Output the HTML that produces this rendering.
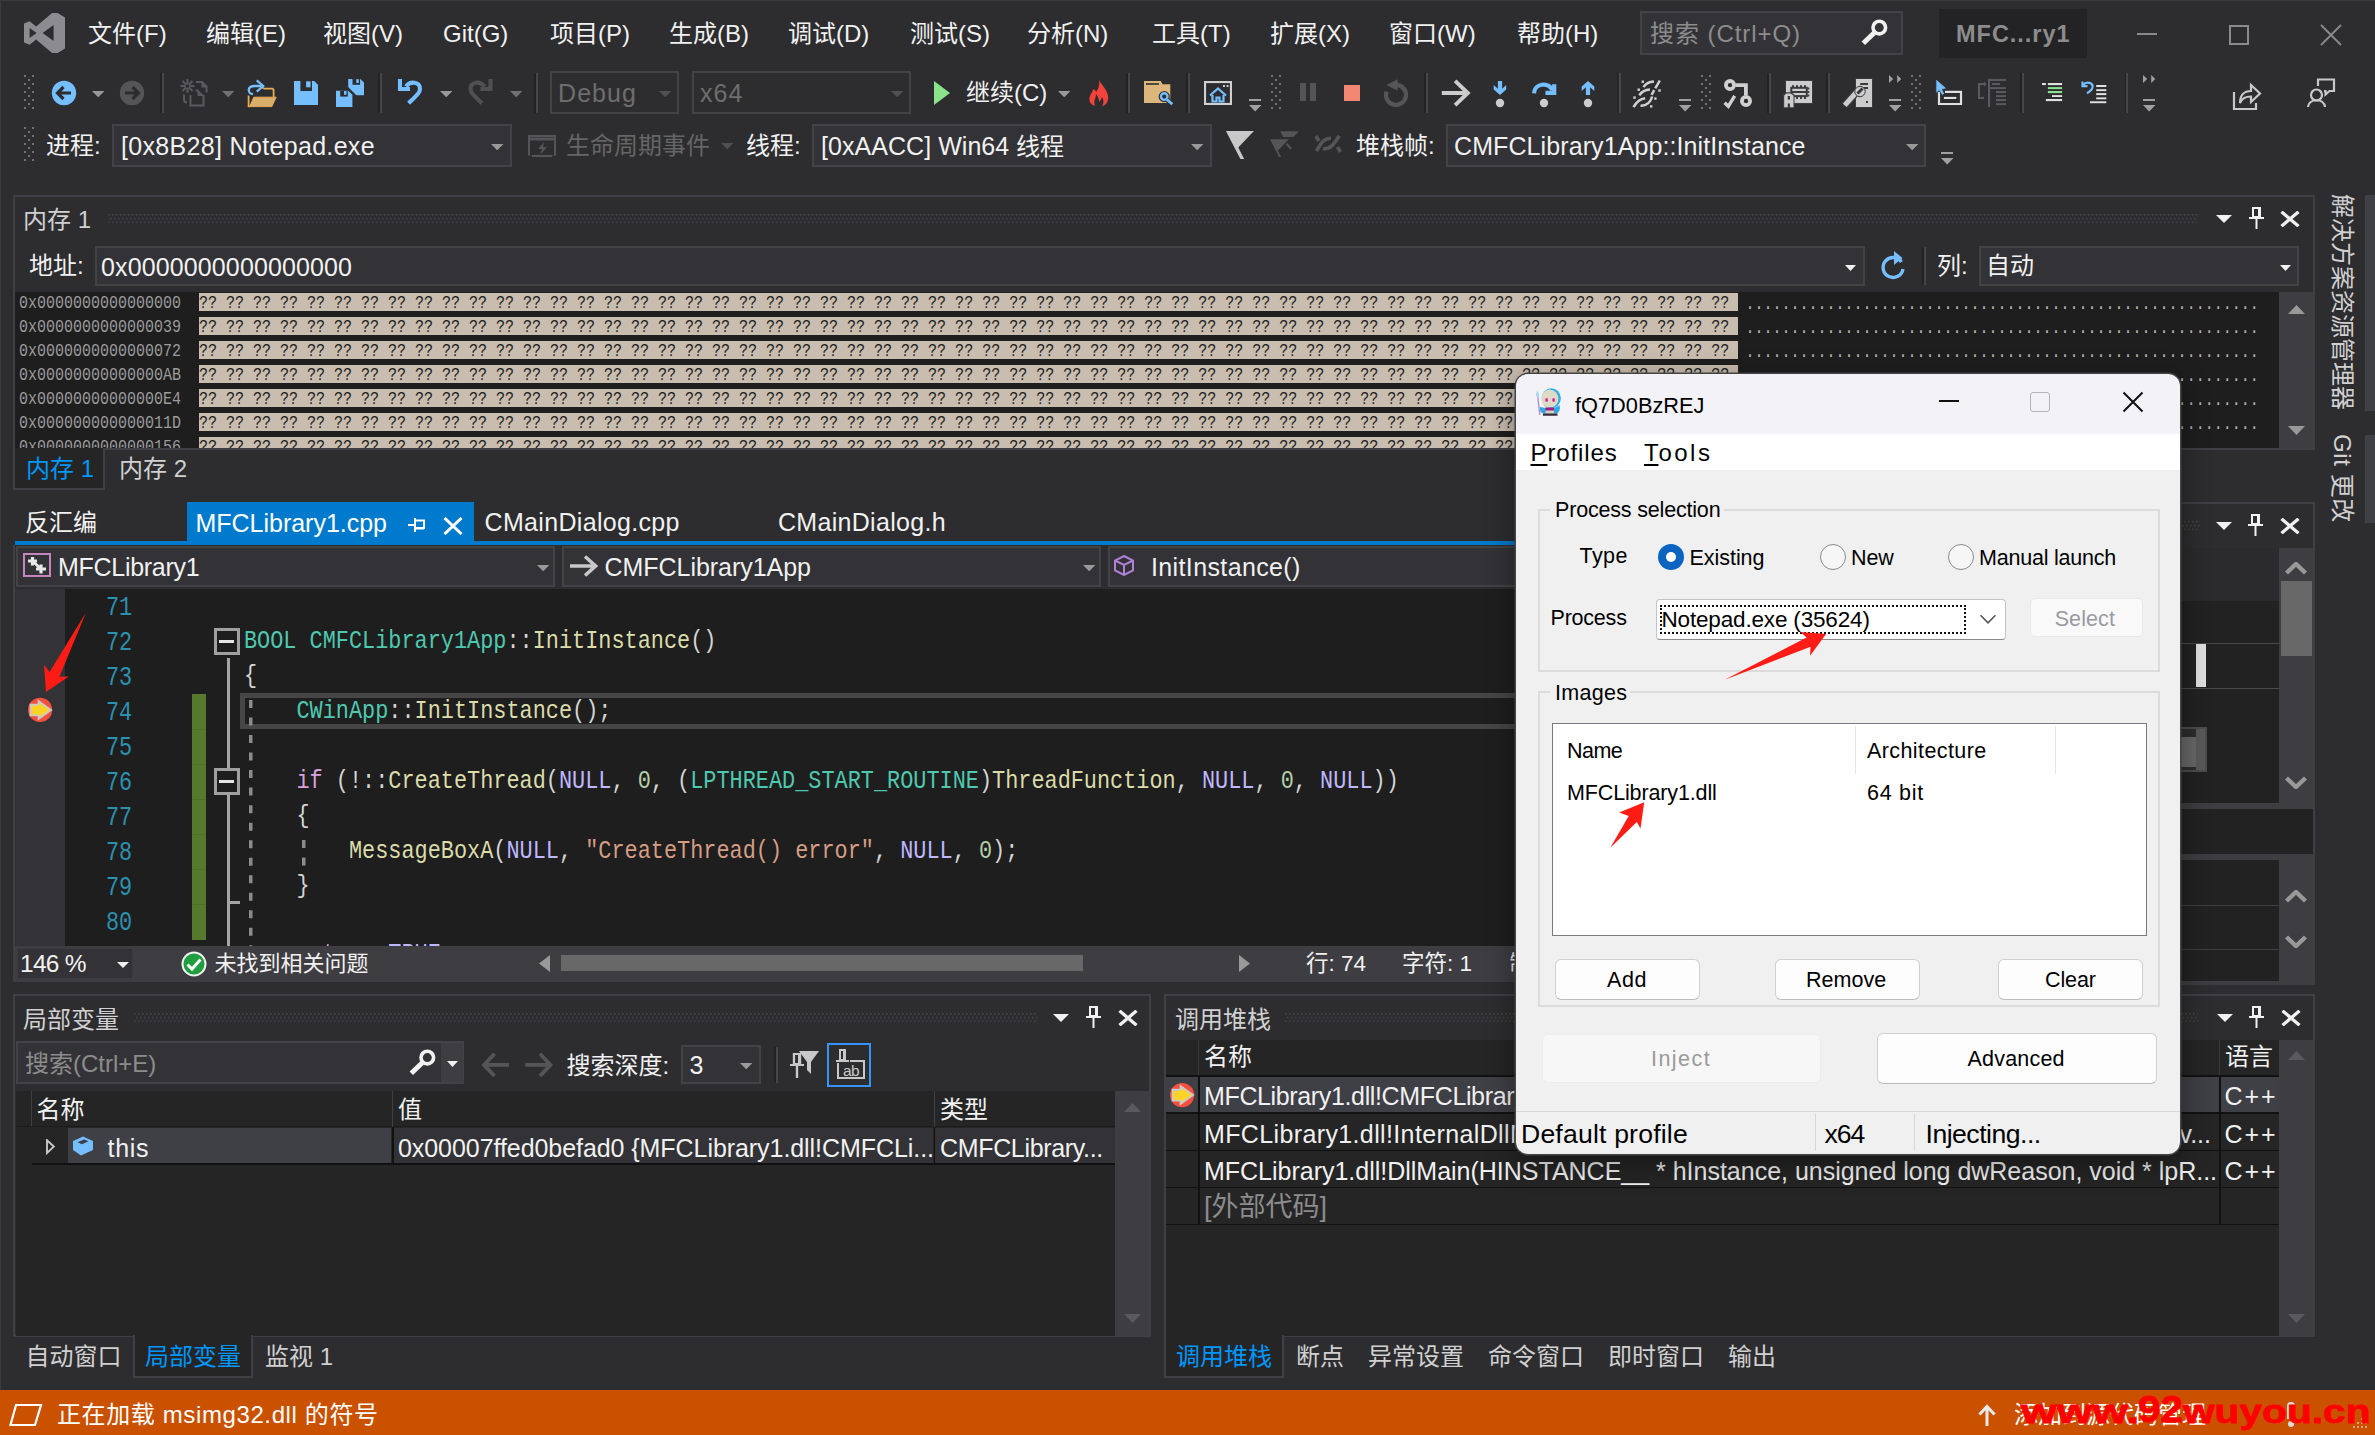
<!DOCTYPE html>
<html lang="zh-CN"><head><meta charset="utf-8"><title>MFCLibrary1</title>
<style>
html,body{margin:0;padding:0}
body{width:2375px;height:1435px;overflow:hidden;background:#2d2d30;position:relative;font-family:'Liberation Sans','Noto Sans CJK SC',sans-serif}
.b{position:absolute;display:block}
.t{position:absolute;white-space:nowrap}
.mr{position:absolute;left:4.4px;white-space:pre;font:18px 'Liberation Mono',monospace;line-height:24px;transform:scaleX(.8333);transform-origin:0 0}
.ma{color:#9b9b9b}.mh{color:#1e1e1e}.md{color:#b4b4b4;position:relative;left:-2px;top:1.5px}
.ln{position:absolute;left:90.6px;white-space:pre;font:27.6px 'Liberation Mono',monospace;line-height:40px;color:#2b91af;transform:scaleX(.791);transform-origin:0 0}
.cl{position:absolute;left:229px;white-space:pre;font:26px 'Liberation Mono',monospace;line-height:40px;color:#d4d4d4;transform:scaleX(.841);transform-origin:0 0}
.cl i{font-style:normal}
.ty{color:#4ec9b0}.fn{color:#dcdcaa}.kw{color:#d8a0df}.mc{color:#beb7ff}.nu{color:#b5cea8}.st{color:#d69d85}
.vt{writing-mode:vertical-rl;text-orientation:sideways}
.wm{color:#ff0000;font-weight:bold;font-family:'Liberation Sans',sans-serif;-webkit-text-stroke:0.8px #ff0000;transform-origin:0 100%}
.dlg{border-radius:12px;overflow:hidden;box-shadow:0 0 0 1.500px #444,0 8px 30px rgba(0,0,0,.45)}
.dlg u{text-decoration-thickness:1.500px;text-underline-offset:3px}
</style></head>
<body>
<div class="b" style="left:0px;top:0px;width:2375px;height:1px;background:#3b3b3e;"></div>
<div class="b" style="left:0px;top:0px;width:1px;height:1390px;background:#3b3b3e;"></div>
<svg class="b" style="left:24.4px;top:13px;" width="41" height="40" viewBox="0 0 41 40"><path fill="#8c8c90" fill-rule="evenodd" d="M33.600 0L41 4.600V35.400L33.600 40H28.100L12.100 26.400L5.600 31.800L0 29.400V10.600L5.600 8.200L12.100 13.600L28.100 0ZM5.600 15V25L12.600 20ZM29.600 12V28L18.600 20Z"/></svg>
<div class="t" style="left:88px;top:13.7px;line-height:40px;font-size:24px;color:#f1f1f1;">文件(F)</div>
<div class="t" style="left:206px;top:13.7px;line-height:40px;font-size:24px;color:#f1f1f1;">编辑(E)</div>
<div class="t" style="left:323px;top:13.7px;line-height:40px;font-size:24px;color:#f1f1f1;">视图(V)</div>
<div class="t" style="left:443px;top:13.7px;line-height:40px;font-size:24px;color:#f1f1f1;">Git(G)</div>
<div class="t" style="left:550px;top:13.7px;line-height:40px;font-size:24px;color:#f1f1f1;">项目(P)</div>
<div class="t" style="left:669px;top:13.7px;line-height:40px;font-size:24px;color:#f1f1f1;">生成(B)</div>
<div class="t" style="left:788px;top:13.7px;line-height:40px;font-size:24px;color:#f1f1f1;">调试(D)</div>
<div class="t" style="left:910px;top:13.7px;line-height:40px;font-size:24px;color:#f1f1f1;">测试(S)</div>
<div class="t" style="left:1027px;top:13.7px;line-height:40px;font-size:24px;color:#f1f1f1;">分析(N)</div>
<div class="t" style="left:1152px;top:13.7px;line-height:40px;font-size:24px;color:#f1f1f1;">工具(T)</div>
<div class="t" style="left:1270px;top:13.7px;line-height:40px;font-size:24px;color:#f1f1f1;">扩展(X)</div>
<div class="t" style="left:1389px;top:13.7px;line-height:40px;font-size:24px;color:#f1f1f1;">窗口(W)</div>
<div class="t" style="left:1517px;top:13.7px;line-height:40px;font-size:24px;color:#f1f1f1;">帮助(H)</div>
<div class="b" style="left:1640px;top:11px;width:263px;height:44px;background:#333337;border:2px solid #434346;box-sizing:border-box"></div>
<div class="t" style="left:1650px;top:14.3px;line-height:40px;font-size:24px;color:#8c8c8c;letter-spacing:0.933px;">搜索 (Ctrl+Q)</div>
<svg class="b" style="left:1858px;top:18px" width="32" height="30" viewBox="1858 18 32 30"><circle cx="1879.300" cy="27.600" r="6.300" fill="none" stroke="#f1f1f1" stroke-width="3.600"/><path d="M1874.300 32.800L1863.300 43.200" stroke="#f1f1f1" stroke-width="5"/></svg>
<div class="b" style="left:1939px;top:9px;width:148px;height:49px;background:#232325;"></div>
<div class="t" style="left:1956px;top:14.3px;line-height:40px;font-size:23.5px;color:#8c8c8c;letter-spacing:0.977px;font-weight:bold;">MFC...ry1</div>
<div class="b" style="left:2137px;top:33px;width:20px;height:2px;background:#8a8a8a;"></div>
<div class="b" style="left:2229px;top:25px;width:20px;height:20px;border:2px solid #8a8a8a;box-sizing:border-box"></div>
<svg class="b" style="left:2320px;top:24px;" width="22" height="22" viewBox="0 0 22 22"><path d="M1 1L21 21M21 1L1 21" stroke="#8a8a8a" stroke-width="1.8"/></svg>
<svg class="b" style="left:24px;top:75px;" width="10" height="34" viewBox="0 0 10 34"><rect x="0" y="0" width="2" height="2" fill="#727276"/><rect x="8" y="0" width="2" height="2" fill="#727276"/><rect x="4" y="4" width="2" height="2" fill="#727276"/><rect x="0" y="8" width="2" height="2" fill="#727276"/><rect x="8" y="8" width="2" height="2" fill="#727276"/><rect x="4" y="12" width="2" height="2" fill="#727276"/><rect x="0" y="16" width="2" height="2" fill="#727276"/><rect x="8" y="16" width="2" height="2" fill="#727276"/><rect x="4" y="20" width="2" height="2" fill="#727276"/><rect x="0" y="24" width="2" height="2" fill="#727276"/><rect x="8" y="24" width="2" height="2" fill="#727276"/><rect x="4" y="28" width="2" height="2" fill="#727276"/><rect x="0" y="32" width="2" height="2" fill="#727276"/><rect x="8" y="32" width="2" height="2" fill="#727276"/></svg>
<svg class="b" style="left:51px;top:80px;" width="26" height="26" viewBox="0 0 26 26"><circle cx="13" cy="13" r="12.2" fill="#75beff"/><path d="M20 13H7M12.5 7L6.5 13L12.5 19" fill="none" stroke="#2d2d30" stroke-width="3.2"/></svg>
<svg class="b" style="left:91.6px;top:90.85px;" width="12.4" height="6.3" viewBox="0 0 12.4 6.3"><path d="M0 0H12.4L6.2 6.3Z" fill="#999"/></svg>
<svg class="b" style="left:119px;top:80px;" width="26" height="26" viewBox="0 0 26 26"><circle cx="13" cy="13" r="12.2" fill="#555558"/><path d="M6 13H19M13.5 7L19.5 13L13.5 19" fill="none" stroke="#2d2d30" stroke-width="3.2"/></svg>
<div class="b" style="left:160.2px;top:73.2px;width:1.8px;height:40px;background:#222224;"></div><div class="b" style="left:162px;top:73.2px;width:2px;height:40px;background:#46464a;"></div>
<svg class="b" style="left:179.5px;top:79px;" width="29" height="29" viewBox="0 0 29 29"><g fill="none" stroke="#5a5a5e" stroke-width="2"><path d="M7.500 0V14M0.500 7H14.500M2.500 2L12.500 12M12.500 2L2.500 12"/><path d="M16 3H22L26.500 7.500V13.500"/><path d="M10.500 16V26.500H23.500V16"/><path d="M15.500 11.500H18.500"/><path d="M4 15.500V20.500Q4 23.500 7 23.500"/></g><path d="M21.500 2L27.500 8.500H21.500Z" fill="#5a5a5e"/><path d="M17.500 10.500L24.500 17H17.500Z" fill="#5a5a5e"/><circle cx="7.500" cy="7" r="1.800" fill="#2d2d30"/></svg>
<svg class="b" style="left:221.8px;top:90.85px;" width="12.4" height="6.3" viewBox="0 0 12.4 6.3"><path d="M0 0H12.4L6.2 6.3Z" fill="#707070"/></svg>
<svg class="b" style="left:247px;top:79px;" width="31" height="29" viewBox="0 0 31 29"><path d="M6.800 18.200H29.200L24.800 27.600H2.600Z" fill="#d9ad6b" stroke="#e8ab53" stroke-width="1"/><path d="M1.600 16.500V27.300H3" fill="none" stroke="#e8ab53" stroke-width="1.800"/><path d="M16.500 9.700H25Q26.600 9.700 26.600 11.300V18" fill="none" stroke="#e8ab53" stroke-width="1.800"/><path d="M16.500 9.700L15.500 8.300" stroke="#e8ab53" stroke-width="1.800"/><path d="M6 15.200C0.500 14.500 -0.500 7 8 7H15.500" fill="none" stroke="#75beff" stroke-width="2.300"/><path d="M9.700 1.400L16.200 7L9.700 12.600" fill="none" stroke="#75beff" stroke-width="2.300"/></svg>
<svg class="b" style="left:293.8px;top:80.7px;" width="24.4" height="24.6" viewBox="0 0 24.4 24.6"><path d="M0 0H20.200L24.400 4.200V24.600H0Z" fill="#75beff"/><rect x="6.400" y="0" width="11.600" height="10" fill="#2d2d30"/><rect x="12.100" y="0.300" width="4.500" height="6" fill="#75beff"/></svg>
<svg class="b" style="left:335.8px;top:78.9px;" width="28.4" height="28.2" viewBox="0 0 28.4 28.2"><path d="M12.200 0H24.400L28.200 3.800V16.200H12.200Z" fill="#75beff"/><rect x="16.500" y="0" width="7.600" height="5.800" fill="#2d2d30"/><rect x="20.300" y="0.200" width="2.500" height="3.800" fill="#75beff"/><path d="M11 9L19.500 17.500" stroke="#2d2d30" stroke-width="3"/><path d="M0 11.800H12.400L16.400 15.800V28H0Z" fill="#75beff"/><rect x="4.200" y="11.800" width="7.600" height="5.800" fill="#2d2d30"/><rect x="8" y="12" width="2.500" height="3.800" fill="#75beff"/></svg>
<div class="b" style="left:378.2px;top:73.2px;width:1.8px;height:40px;background:#222224;"></div><div class="b" style="left:380px;top:73.2px;width:2px;height:40px;background:#46464a;"></div>
<svg class="b" style="left:396px;top:78px;" width="29" height="29" viewBox="0 0 29 29"><path d="M4 1V11H14" fill="none" stroke="#75beff" stroke-width="4.100"/><path d="M10 8.500C14 2.500 24 3.500 24 11C24 14.500 21.500 16.500 12.600 25.300" fill="none" stroke="#75beff" stroke-width="4.100"/></svg>
<svg class="b" style="left:439.8px;top:90.85px;" width="12.4" height="6.3" viewBox="0 0 12.4 6.3"><path d="M0 0H12.4L6.2 6.3Z" fill="#999"/></svg>
<svg class="b" style="left:466.5px;top:78px;" width="29" height="29" viewBox="0 0 29 29"><path d="M23.500 1V11H13.500" fill="none" stroke="#505053" stroke-width="4.100"/><path d="M17.500 8.500C13.500 2.500 3.500 3.500 3.500 11C3.500 14.500 6 16.500 14.900 25.300" fill="none" stroke="#505053" stroke-width="4.100"/></svg>
<svg class="b" style="left:509.8px;top:90.85px;" width="12.4" height="6.3" viewBox="0 0 12.4 6.3"><path d="M0 0H12.4L6.2 6.3Z" fill="#707070"/></svg>
<div class="b" style="left:534.2px;top:73.2px;width:1.8px;height:40px;background:#222224;"></div><div class="b" style="left:536px;top:73.2px;width:2px;height:40px;background:#46464a;"></div>
<div class="b" style="left:550px;top:71px;width:129px;height:43px;background:#2d2d30;border:2px solid #434346;box-sizing:border-box"></div>
<div class="t" style="left:558px;top:73.0px;line-height:40px;font-size:25px;color:#6d6d6d;letter-spacing:1.082px;">Debug</div>
<svg class="b" style="left:658.8px;top:90.85px;" width="12.4" height="6.3" viewBox="0 0 12.4 6.3"><path d="M0 0H12.4L6.2 6.3Z" fill="#505053"/></svg>
<div class="b" style="left:692px;top:71px;width:219px;height:43px;background:#2d2d30;border:2px solid #434346;box-sizing:border-box"></div>
<div class="t" style="left:700px;top:73.0px;line-height:40px;font-size:25px;color:#6d6d6d;letter-spacing:1.094px;">x64</div>
<svg class="b" style="left:890.8px;top:90.85px;" width="12.4" height="6.3" viewBox="0 0 12.4 6.3"><path d="M0 0H12.4L6.2 6.3Z" fill="#505053"/></svg>
<svg class="b" style="left:934px;top:81px;" width="16" height="24" viewBox="0 0 16 24"><path d="M0 0L16 12L0 24Z" fill="#8ae28a"/></svg>
<div class="t" style="left:966px;top:73.0px;line-height:40px;font-size:24px;color:#f1f1f1;">继续(C)</div>
<svg class="b" style="left:1057.8px;top:90.85px;" width="12.4" height="6.3" viewBox="0 0 12.4 6.3"><path d="M0 0H12.4L6.2 6.3Z" fill="#999"/></svg>
<svg class="b" style="left:1089px;top:80px;" width="20" height="26" viewBox="0 0 20 26"><path d="M10 0C12 4 18 9 19 16C20 22 16 26 13 26C15 23 15 20 13 17C12 20 11 21 10 22C10 19 9 16 7 14C7 19 4 20 6 26C2 25 -1 21 1 16C2 13 4 12 4 9C6 10 7 11 7 12C9 9 11 5 10 0Z" fill="#f4433c"/></svg>
<div class="b" style="left:1126.4px;top:73.2px;width:1.8px;height:40px;background:#222224;"></div><div class="b" style="left:1128.2px;top:73.2px;width:2px;height:40px;background:#46464a;"></div>
<svg class="b" style="left:1142px;top:79px" width="33" height="29" viewBox="1142 79 33 29"><path d="M1144 80.900H1160.800L1162.500 84.300H1170.300V103H1144Z" fill="#dcb67a"/><rect x="1146" y="83.200" width="13" height="1.600" fill="#2d2d30"/><circle cx="1164.200" cy="96.600" r="5.600" fill="#2d2d30"/><circle cx="1164.200" cy="96.600" r="3.300" fill="none" stroke="#75beff" stroke-width="2.400"/><path d="M1166.800 99.400L1172.300 104.300" stroke="#2d2d30" stroke-width="5"/><path d="M1166.800 99.400L1172.300 104.300" stroke="#75beff" stroke-width="2.800"/></svg>
<div class="b" style="left:1186.3px;top:73.2px;width:1.8px;height:40px;background:#222224;"></div><div class="b" style="left:1188.1px;top:73.2px;width:2px;height:40px;background:#46464a;"></div>
<svg class="b" style="left:1204px;top:81px;" width="28" height="24" viewBox="0 0 28 24"><rect x="1" y="1" width="26" height="22" fill="none" stroke="#d0d0d0" stroke-width="2.200"/><rect x="19" y="4" width="2" height="2" fill="#c8c8c8"/><rect x="22.5" y="4" width="2" height="2" fill="#c8c8c8"/><path d="M6 14.5L14 7.5L22 14.5" fill="none" stroke="#75beff" stroke-width="2.2"/><path d="M8.5 14V20.5H12.5V16.5H15.5V20.5H19.5V14" fill="none" stroke="#75beff" stroke-width="2.2"/></svg>
<div class="b" style="left:1248.8px;top:99.0px;width:12.4px;height:2px;background:#a0a0a0;"></div><svg class="b" style="left:1248.8px;top:105.0px;" width="12.4" height="6.5" viewBox="0 0 12.4 6.5"><path d="M0 0H12.4L6.2 6.400Z" fill="#a0a0a0"/></svg>
<svg class="b" style="left:1271px;top:75px;" width="10" height="34" viewBox="0 0 10 34"><rect x="0" y="0" width="2" height="2" fill="#727276"/><rect x="8" y="0" width="2" height="2" fill="#727276"/><rect x="4" y="4" width="2" height="2" fill="#727276"/><rect x="0" y="8" width="2" height="2" fill="#727276"/><rect x="8" y="8" width="2" height="2" fill="#727276"/><rect x="4" y="12" width="2" height="2" fill="#727276"/><rect x="0" y="16" width="2" height="2" fill="#727276"/><rect x="8" y="16" width="2" height="2" fill="#727276"/><rect x="4" y="20" width="2" height="2" fill="#727276"/><rect x="0" y="24" width="2" height="2" fill="#727276"/><rect x="8" y="24" width="2" height="2" fill="#727276"/><rect x="4" y="28" width="2" height="2" fill="#727276"/><rect x="0" y="32" width="2" height="2" fill="#727276"/><rect x="8" y="32" width="2" height="2" fill="#727276"/></svg>
<div class="b" style="left:1300px;top:83px;width:6px;height:18px;background:#555558;"></div><div class="b" style="left:1310px;top:83px;width:6px;height:18px;background:#555558;"></div>
<div class="b" style="left:1344px;top:85px;width:16.1px;height:16px;background:#f48771;"></div>
<svg class="b" style="left:1382px;top:77px" width="28" height="32" viewBox="1382 77 28 32"><path d="M1396 84.900A10 10 0 1 1 1386.600 91.500" fill="none" stroke="#555558" stroke-width="4.200"/><path d="M1386.300 85L1397.600 79.200V90.700Z" fill="#555558"/></svg>
<div class="b" style="left:1424.2px;top:73.2px;width:1.8px;height:40px;background:#222224;"></div><div class="b" style="left:1426px;top:73.2px;width:2px;height:40px;background:#46464a;"></div>
<svg class="b" style="left:1440px;top:78px" width="32" height="30" viewBox="1440 78 32 30"><path d="M1441.800 93H1467.500M1455.100 80.900L1467.800 93L1455.100 105.100" fill="none" stroke="#cccccc" stroke-width="3.900"/></svg>
<svg class="b" style="left:1492px;top:79px" width="16" height="30" viewBox="1492 79 16 30"><path d="M1497.900 80.900H1502.100V88.800L1506.200 85.100V89.600L1500 95.100L1493.700 89.600V85.100L1497.900 88.800Z" fill="#75beff"/><circle cx="1500" cy="103" r="4.200" fill="#cccccc"/></svg>
<svg class="b" style="left:1530px;top:79px" width="28" height="30" viewBox="1530 79 28 30"><path d="M1534 93.300C1534.500 83.500 1547.500 81.500 1552.500 90" fill="none" stroke="#75beff" stroke-width="4.200"/><path d="M1554.200 84.200V92.800H1545.400" fill="none" stroke="#75beff" stroke-width="4.200"/><circle cx="1544" cy="103" r="4.200" fill="#cccccc"/></svg>
<svg class="b" style="left:1580px;top:79px" width="16" height="30" viewBox="1580 79 16 30"><path d="M1588 80.900L1594.300 86.500V91L1590.100 87.300V94.900H1585.900V87.300L1581.700 91V86.500Z" fill="#75beff"/><circle cx="1588" cy="103" r="4.200" fill="#cccccc"/></svg>
<div class="b" style="left:1616.7px;top:73.2px;width:1.8px;height:40px;background:#222224;"></div><div class="b" style="left:1618.5px;top:73.2px;width:2px;height:40px;background:#46464a;"></div>
<svg class="b" style="left:1632px;top:78px" width="31" height="32" viewBox="1632 78 31 32"><g fill="none" stroke="#d0d0d0" stroke-width="2.500" stroke-linecap="butt"><path d="M1643.500 87.200Q1646.500 82 1654 81.600"/><path d="M1639.300 95.400Q1642.500 90 1650 89.500"/><path d="M1633.500 107.200Q1638 99 1645.200 98.200"/><path d="M1659.800 80.500L1655.300 88.300M1654.200 90.200L1651.600 94.800"/><path d="M1652.200 96.500Q1649.500 106 1640.500 105.700"/></g><g fill="#d0d0d0"><rect x="1641.600" y="80.500" width="2.400" height="2.400"/><rect x="1637.500" y="88.500" width="2.400" height="2.400"/><rect x="1658.300" y="89.300" width="2.400" height="2.400"/><rect x="1633.300" y="96.400" width="2.400" height="2.400"/><rect x="1654.200" y="97.400" width="2.400" height="2.400"/><rect x="1650" y="105.200" width="2.400" height="2.400"/></g></svg>
<div class="b" style="left:1678.8px;top:99.0px;width:12.4px;height:2px;background:#a0a0a0;"></div><svg class="b" style="left:1678.8px;top:105.0px;" width="12.4" height="6.5" viewBox="0 0 12.4 6.5"><path d="M0 0H12.4L6.2 6.400Z" fill="#a0a0a0"/></svg>
<svg class="b" style="left:1701px;top:75px;" width="10" height="34" viewBox="0 0 10 34"><rect x="0" y="0" width="2" height="2" fill="#727276"/><rect x="8" y="0" width="2" height="2" fill="#727276"/><rect x="4" y="4" width="2" height="2" fill="#727276"/><rect x="0" y="8" width="2" height="2" fill="#727276"/><rect x="8" y="8" width="2" height="2" fill="#727276"/><rect x="4" y="12" width="2" height="2" fill="#727276"/><rect x="0" y="16" width="2" height="2" fill="#727276"/><rect x="8" y="16" width="2" height="2" fill="#727276"/><rect x="4" y="20" width="2" height="2" fill="#727276"/><rect x="0" y="24" width="2" height="2" fill="#727276"/><rect x="8" y="24" width="2" height="2" fill="#727276"/><rect x="4" y="28" width="2" height="2" fill="#727276"/><rect x="0" y="32" width="2" height="2" fill="#727276"/><rect x="8" y="32" width="2" height="2" fill="#727276"/></svg>
<svg class="b" style="left:1722px;top:77px" width="32" height="32" viewBox="1722 77 32 32"><g fill="none" stroke="#d0d0d0" stroke-width="3.800"><circle cx="1730" cy="85.100" r="4.100"/><circle cx="1746" cy="101" r="4.100"/><path d="M1735.500 85.100H1745.900V95.500"/></g><path d="M1724.600 102.800L1728.300 106.300L1734.700 95.800" fill="none" stroke="#d0d0d0" stroke-width="3.400"/></svg>
<div class="b" style="left:1767.2px;top:73.2px;width:1.8px;height:40px;background:#222224;"></div><div class="b" style="left:1769px;top:73.2px;width:2px;height:40px;background:#46464a;"></div>
<svg class="b" style="left:1782px;top:79px" width="33" height="30" viewBox="1782 79 33 30"><rect x="1785" y="80" width="28" height="24" fill="#3c3c40"/><rect x="1786" y="81" width="26" height="22" fill="#cccccc"/><g fill="none" stroke="#3a3a3d" stroke-width="2"><rect x="1791.300" y="87.800" width="15.500" height="8.300"/><path d="M1791.300 92H1806.800"/></g><g fill="#3a3a3d"><rect x="1792" y="85.200" width="2" height="2"/><rect x="1796" y="85.200" width="2" height="2"/><rect x="1800" y="85.200" width="2" height="2"/><rect x="1804" y="85.200" width="2" height="2"/><rect x="1796" y="97" width="2" height="2"/><rect x="1800" y="97" width="2" height="2"/><rect x="1804" y="97" width="2" height="2"/><rect x="1807.500" y="87.500" width="1.800" height="2"/><rect x="1807.500" y="91" width="1.800" height="2"/><rect x="1807.500" y="94.500" width="1.800" height="2"/></g><path d="M1783 108.200V94.500L1786 92.300H1791L1794.500 94.500V108.200Z" fill="#3c3c40"/><path d="M1784.200 107.200V95.500L1786.500 93.400H1790.500L1793.500 95.500V107.200H1790V103.400H1787.700V107.200Z" fill="#cccccc"/><rect x="1787.700" y="96" width="2.300" height="3.600" fill="#3a3a3d"/></svg>
<div class="b" style="left:1826.3px;top:73.2px;width:1.8px;height:40px;background:#222224;"></div><div class="b" style="left:1828.1px;top:73.2px;width:2px;height:40px;background:#46464a;"></div>
<svg class="b" style="left:1842px;top:77px" width="33" height="32" viewBox="1842 77 33 32"><rect x="1855" y="78" width="18" height="30" fill="#3c3c40"/><rect x="1856" y="79" width="16" height="28" fill="#cccccc"/><path d="M1860.200 84H1868M1860.200 88H1868" stroke="#3a3a3d" stroke-width="1.800"/><rect x="1866" y="101" width="2" height="2" fill="#3a3a3d"/><path d="M1844.500 105.500L1858 90.500" stroke="#3c3c40" stroke-width="7.500"/><path d="M1844.700 105.300L1858 90.500" stroke="#cccccc" stroke-width="5"/><circle cx="1860" cy="91.500" r="5.200" fill="#cccccc" stroke="#3c3c40" stroke-width="1"/><path d="M1857.500 93.500L1862.500 88.500" stroke="#3a3a3d" stroke-width="3"/></svg>
<div class="b" style="left:1888.8px;top:99.0px;width:12.4px;height:2px;background:#a0a0a0;"></div><svg class="b" style="left:1888.8px;top:105.0px;" width="12.4" height="6.5" viewBox="0 0 12.4 6.5"><path d="M0 0H12.4L6.2 6.400Z" fill="#a0a0a0"/></svg><svg class="b" style="left:1888.8px;top:75px;" width="12.4" height="8" viewBox="0 0 12.4 8"><path d="M0 0L4.200 4L0 8Z M8.200 0L12.400 4L8.200 8Z" fill="#a0a0a0"/></svg>
<svg class="b" style="left:1911px;top:75px;" width="10" height="34" viewBox="0 0 10 34"><rect x="0" y="0" width="2" height="2" fill="#727276"/><rect x="8" y="0" width="2" height="2" fill="#727276"/><rect x="4" y="4" width="2" height="2" fill="#727276"/><rect x="0" y="8" width="2" height="2" fill="#727276"/><rect x="8" y="8" width="2" height="2" fill="#727276"/><rect x="4" y="12" width="2" height="2" fill="#727276"/><rect x="0" y="16" width="2" height="2" fill="#727276"/><rect x="8" y="16" width="2" height="2" fill="#727276"/><rect x="4" y="20" width="2" height="2" fill="#727276"/><rect x="0" y="24" width="2" height="2" fill="#727276"/><rect x="8" y="24" width="2" height="2" fill="#727276"/><rect x="4" y="28" width="2" height="2" fill="#727276"/><rect x="0" y="32" width="2" height="2" fill="#727276"/><rect x="8" y="32" width="2" height="2" fill="#727276"/></svg>
<svg class="b" style="left:1934px;top:77px" width="30" height="30" viewBox="1934 77 30 30"><path d="M1939 91.800V104H1961V91.800H1945" fill="none" stroke="#e0e0e0" stroke-width="2.200"/><rect x="1943.900" y="96.900" width="12.400" height="2.100" fill="#e0e0e0"/><path d="M1935.900 78.900V93.400L1939.200 90.700L1942.100 95.400L1944.600 93.800L1942.400 89.500L1946.800 88.600Z" fill="#75beff" stroke="#2d2d30" stroke-width="0.800"/></svg>
<svg class="b" style="left:1977px;top:77px" width="31" height="32" viewBox="1977 77 31 32"><g fill="#5a5a5e"><rect x="1988" y="78.900" width="2.100" height="28"/><rect x="1988" y="78.900" width="18" height="2.100"/><rect x="1992" y="83" width="8.200" height="2.100"/><rect x="1990" y="87.100" width="16" height="2"/><rect x="1996" y="91" width="10" height="2.100"/><rect x="1996" y="95.100" width="10" height="2"/><rect x="1996" y="99" width="10" height="2.100"/><rect x="1996" y="103.100" width="10" height="2"/><rect x="1978" y="83" width="2.100" height="16"/><rect x="1978" y="83" width="6.500" height="2.100"/><rect x="1978" y="96.900" width="6" height="2.100"/><path d="M1984 81.400L1986.800 84L1984 86.700Z"/></g></svg>
<div class="b" style="left:2020.2px;top:73.2px;width:1.8px;height:40px;background:#222224;"></div><div class="b" style="left:2022px;top:73.2px;width:2px;height:40px;background:#46464a;"></div>
<svg class="b" style="left:2041px;top:82px" width="22" height="20" viewBox="2041 82 22 20"><g fill="#e0e0e0"><rect x="2042" y="83" width="3.900" height="2.100"/><rect x="2047.900" y="83" width="14.200" height="2.100"/><rect x="2052" y="95.100" width="10.100" height="1.900"/><rect x="2045.900" y="99" width="16.200" height="2.100"/></g><g fill="#8ae28a"><rect x="2047.900" y="87.100" width="14.200" height="2"/><rect x="2047.900" y="91" width="14.200" height="2.100"/></g></svg>
<svg class="b" style="left:2080px;top:80px" width="28" height="24" viewBox="2080 80 28 24"><g fill="#e0e0e0"><rect x="2096.200" y="85" width="10.100" height="2"/><rect x="2096.200" y="89.200" width="10.100" height="1.900"/><rect x="2096.200" y="93.100" width="10.100" height="2"/><rect x="2096.200" y="97.400" width="10.100" height="1.900"/><rect x="2090" y="101.300" width="16.300" height="1.900"/></g><path d="M2083 84.800C2087 80.500 2093.500 83 2092.500 87.500C2092 90 2089.500 91.700 2087 93.300" fill="none" stroke="#75beff" stroke-width="2.200"/><path d="M2082.500 81.400V86.200H2087.500" fill="none" stroke="#75beff" stroke-width="2.200"/></svg>
<div class="b" style="left:2124.5px;top:73.2px;width:1.8px;height:40px;background:#222224;"></div><div class="b" style="left:2126.3px;top:73.2px;width:2px;height:40px;background:#46464a;"></div>
<div class="b" style="left:2142.8px;top:99.0px;width:12.4px;height:2px;background:#a0a0a0;"></div><svg class="b" style="left:2142.8px;top:105.0px;" width="12.4" height="6.5" viewBox="0 0 12.4 6.5"><path d="M0 0H12.4L6.2 6.400Z" fill="#a0a0a0"/></svg><svg class="b" style="left:2142.8px;top:75px;" width="12.4" height="8" viewBox="0 0 12.4 8"><path d="M0 0L4.200 4L0 8Z M8.200 0L12.400 4L8.200 8Z" fill="#a0a0a0"/></svg>
<svg class="b" style="left:2232px;top:82px;" width="30" height="29" viewBox="0 0 30 29"><g fill="none" stroke="#c8c8c8" stroke-width="2.2"><path d="M2 10V27H24V21"/><path d="M8 21C8 13 12 9 19 9V3L28 11.5L19 20V14.5C14 14.500 10 16 8 21Z"/></g></svg>
<svg class="b" style="left:2307px;top:78px;" width="29" height="30" viewBox="0 0 29 30"><g fill="none" stroke="#c8c8c8" stroke-width="2.2"><circle cx="9.500" cy="17" r="5.5"/><path d="M1 29C2 20 17 20 18 29"/><path d="M11 8V1.5H27V13H22.5L18.5 16.5V13H17"/></g></svg>
<svg class="b" style="left:24px;top:127px;" width="10" height="34" viewBox="0 0 10 34"><rect x="0" y="0" width="2" height="2" fill="#727276"/><rect x="8" y="0" width="2" height="2" fill="#727276"/><rect x="4" y="4" width="2" height="2" fill="#727276"/><rect x="0" y="8" width="2" height="2" fill="#727276"/><rect x="8" y="8" width="2" height="2" fill="#727276"/><rect x="4" y="12" width="2" height="2" fill="#727276"/><rect x="0" y="16" width="2" height="2" fill="#727276"/><rect x="8" y="16" width="2" height="2" fill="#727276"/><rect x="4" y="20" width="2" height="2" fill="#727276"/><rect x="0" y="24" width="2" height="2" fill="#727276"/><rect x="8" y="24" width="2" height="2" fill="#727276"/><rect x="4" y="28" width="2" height="2" fill="#727276"/><rect x="0" y="32" width="2" height="2" fill="#727276"/><rect x="8" y="32" width="2" height="2" fill="#727276"/></svg>
<div class="t" style="left:46px;top:126.0px;line-height:40px;font-size:24px;color:#f1f1f1;">进程:</div>
<div class="b" style="left:112px;top:124px;width:400px;height:43px;background:#333337;border:2px solid #434346;box-sizing:border-box"></div>
<div class="t" style="left:121px;top:125.5px;line-height:40px;font-size:25px;color:#f1f1f1;letter-spacing:0.326px;">[0x8B28] Notepad.exe</div>
<svg class="b" style="left:491.3px;top:143.85px;" width="12.4" height="6.3" viewBox="0 0 12.4 6.3"><path d="M0 0H12.4L6.2 6.3Z" fill="#999"/></svg>
<svg class="b" style="left:528px;top:135px;" width="28" height="24" viewBox="0 0 28 24"><rect x="1" y="1" width="26" height="20" fill="none" stroke="#555558" stroke-width="2"/><path d="M1 4H27" stroke="#555558" stroke-width="3"/><path d="M16 7L10 14H14L12 20L19 12H15Z" fill="#555558"/><path d="M0 22H4M24 22H28" stroke="#2d2d30" stroke-width="3"/></svg>
<div class="t" style="left:566px;top:126.0px;line-height:40px;font-size:24px;color:#656565;">生命周期事件</div>
<svg class="b" style="left:720.8px;top:143.35px;" width="12.4" height="6.3" viewBox="0 0 12.4 6.3"><path d="M0 0H12.4L6.2 6.3Z" fill="#505053"/></svg>
<div class="t" style="left:746px;top:126.0px;line-height:40px;font-size:24px;color:#f1f1f1;">线程:</div>
<div class="b" style="left:812px;top:124px;width:400px;height:43px;background:#333337;border:2px solid #434346;box-sizing:border-box"></div>
<div class="t" style="left:821px;top:125.5px;line-height:40px;font-size:24px;color:#f1f1f1;letter-spacing:0.048px;"><span style="font-size:25px">[0xAACC] Win64</span> 线程</div>
<svg class="b" style="left:1191.3px;top:143.85px;" width="12.4" height="6.3" viewBox="0 0 12.4 6.3"><path d="M0 0H12.4L6.2 6.3Z" fill="#999"/></svg>
<svg class="b" style="left:1224px;top:129px" width="32" height="32" viewBox="1224 129 32 32"><path d="M1225.900 130.900H1253.900L1238.300 147.400L1244.200 158.900H1240.400Z" fill="#c8c8c8"/></svg>
<svg class="b" style="left:1268px;top:129px" width="33" height="30" viewBox="1268 129 33 30"><g fill="#555558"><path d="M1280.200 131.200H1298.700L1293.400 137.100H1283.100Z"/><path d="M1270.100 139.200H1288.700L1277.800 150.700L1281.300 156.900H1279Z"/><path d="M1285.700 144.200L1287.500 143L1292 148.500L1290.200 149.600Z"/></g></svg>
<svg class="b" style="left:1312px;top:132px" width="32" height="24" viewBox="1312 132 32 24"><g fill="none" stroke="#555558" stroke-width="3.600"><path d="M1316.500 151.200C1321 143 1323.500 138.200 1331 138.200"/><path d="M1323 148.600C1330.500 149.400 1333.500 145 1339.300 135.600"/><path d="M1316 136L1318.800 141"/><path d="M1337.500 147L1340.500 152"/></g></svg>
<div class="t" style="left:1356px;top:126.0px;line-height:40px;font-size:24px;color:#f1f1f1;">堆栈帧:</div>
<div class="b" style="left:1446px;top:124px;width:480px;height:43px;background:#333337;border:2px solid #434346;box-sizing:border-box"></div>
<div class="t" style="left:1454px;top:125.5px;line-height:40px;font-size:25px;color:#f1f1f1;letter-spacing:0.094px;">CMFCLibrary1App::InitInstance</div>
<svg class="b" style="left:1905.8px;top:143.85px;" width="12.4" height="6.3" viewBox="0 0 12.4 6.3"><path d="M0 0H12.4L6.2 6.3Z" fill="#999"/></svg>
<div class="b" style="left:1940.8px;top:152.0px;width:12.4px;height:2px;background:#a0a0a0;"></div><svg class="b" style="left:1940.8px;top:158.0px;" width="12.4" height="6.5" viewBox="0 0 12.4 6.5"><path d="M0 0H12.4L6.2 6.400Z" fill="#a0a0a0"/></svg>
<div class="b" style="left:13px;top:195px;width:2302px;height:255px;border:2px solid #3f3f46;box-sizing:border-box"></div>
<div class="t" style="left:23px;top:200.0px;line-height:40px;font-size:24px;color:#d0d0d0;">内存 1</div>
<svg class="b" style="left:108px;top:214px;" width="2090" height="10" viewBox="0 0 2090 10"><defs><pattern id="g108_219" width="4" height="7.6" patternUnits="userSpaceOnUse"><rect x="0" y="0" width="1.500" height="1.500" fill="#47474b"/><rect x="2" y="3.800" width="1.500" height="1.500" fill="#47474b"/></pattern></defs><rect width="2090" height="9.2" fill="url(#g108_219)"/></svg>
<svg class="b" style="left:2215.5px;top:215px;" width="16" height="8" viewBox="0 0 16 8"><path d="M0 0H16L8 8Z" fill="#f1f1f1"/></svg><svg class="b" style="left:2248.5px;top:207px;" width="15" height="22" viewBox="0 0 15 22"><g fill="none" stroke="#f1f1f1" stroke-width="2"><path d="M4 1H11V10H4Z"/><path d="M0 11H15"/><path d="M7.5 11V22"/></g><rect x="9" y="1" width="2.5" height="9" fill="#f1f1f1"/></svg><svg class="b" style="left:2280px;top:211px;" width="20" height="16" viewBox="0 0 20 16"><path d="M1.500 0.800L18.500 15.200M18.500 0.800L1.500 15.200" stroke="#f1f1f1" stroke-width="3.300"/></svg>
<div class="t" style="left:29px;top:246.0px;line-height:40px;font-size:24px;color:#f1f1f1;">地址:</div>
<div class="b" style="left:95px;top:246px;width:1770px;height:40px;background:#333337;border:2px solid #434346;box-sizing:border-box"></div>
<div class="t" style="left:101px;top:246.5px;line-height:40px;font-size:25px;color:#f1f1f1;letter-spacing:0.125px;">0x0000000000000000</div>
<svg class="b" style="left:1845.0px;top:265.0px;" width="11" height="6" viewBox="0 0 11 6"><path d="M0 0H11L5.5 6Z" fill="#f1f1f1"/></svg>
<svg class="b" style="left:1880px;top:251px;" width="26" height="30" viewBox="0 0 26 30"><path d="M21.5 11A10 10 0 1 0 23 18" fill="none" stroke="#75beff" stroke-width="3.4"/><path d="M14 0L22.500 7L14 14Z" fill="#75beff"/></svg>
<div class="b" style="left:1922.2px;top:247.2px;width:1.8px;height:38px;background:#222224;"></div><div class="b" style="left:1924px;top:247.2px;width:2px;height:38px;background:#46464a;"></div>
<div class="t" style="left:1937px;top:246.0px;line-height:40px;font-size:24px;color:#f1f1f1;">列:</div>
<div class="b" style="left:1979px;top:246px;width:320px;height:40px;background:#333337;border:2px solid #434346;box-sizing:border-box"></div>
<div class="t" style="left:1986px;top:246.0px;line-height:40px;font-size:24px;color:#f1f1f1;">自动</div>
<svg class="b" style="left:2279.5px;top:265.0px;" width="11" height="6" viewBox="0 0 11 6"><path d="M0 0H11L5.5 6Z" fill="#f1f1f1"/></svg>
<div class="b" style="left:15px;top:292px;width:2264px;height:156px;background:#1e1e1e;"></div>
<div class="b" style="left:2279px;top:292px;width:34px;height:156px;background:#3e3e42;"></div>
<svg class="b" style="left:2288px;top:305px;" width="17" height="9" viewBox="0 0 17 9"><path d="M0 9H17L8.5 0Z" fill="#999"/></svg>
<svg class="b" style="left:2288px;top:426px;" width="17" height="9" viewBox="0 0 17 9"><path d="M0 0H17L8.5 9Z" fill="#999"/></svg>
<div class="b" style="left:15px;top:292px;width:2264px;height:156px;overflow:hidden"><div class="b" style="left:184px;top:0.70px;width:1539px;height:18px;background:#c9bdaf"></div><div class="mr" style="top:-1.30px"><span class="ma">0x0000000000000000</span>  <span class="mh">?? ?? ?? ?? ?? ?? ?? ?? ?? ?? ?? ?? ?? ?? ?? ?? ?? ?? ?? ?? ?? ?? ?? ?? ?? ?? ?? ?? ?? ?? ?? ?? ?? ?? ?? ?? ?? ?? ?? ?? ?? ?? ?? ?? ?? ?? ?? ?? ?? ?? ?? ?? ?? ?? ?? ?? ??</span>  <span class="md">.........................................................</span></div><div class="b" style="left:184px;top:24.70px;width:1539px;height:18px;background:#c9bdaf"></div><div class="mr" style="top:22.70px"><span class="ma">0x0000000000000039</span>  <span class="mh">?? ?? ?? ?? ?? ?? ?? ?? ?? ?? ?? ?? ?? ?? ?? ?? ?? ?? ?? ?? ?? ?? ?? ?? ?? ?? ?? ?? ?? ?? ?? ?? ?? ?? ?? ?? ?? ?? ?? ?? ?? ?? ?? ?? ?? ?? ?? ?? ?? ?? ?? ?? ?? ?? ?? ?? ??</span>  <span class="md">.........................................................</span></div><div class="b" style="left:184px;top:48.70px;width:1539px;height:18px;background:#c9bdaf"></div><div class="mr" style="top:46.70px"><span class="ma">0x0000000000000072</span>  <span class="mh">?? ?? ?? ?? ?? ?? ?? ?? ?? ?? ?? ?? ?? ?? ?? ?? ?? ?? ?? ?? ?? ?? ?? ?? ?? ?? ?? ?? ?? ?? ?? ?? ?? ?? ?? ?? ?? ?? ?? ?? ?? ?? ?? ?? ?? ?? ?? ?? ?? ?? ?? ?? ?? ?? ?? ?? ??</span>  <span class="md">.........................................................</span></div><div class="b" style="left:184px;top:72.70px;width:1539px;height:18px;background:#c9bdaf"></div><div class="mr" style="top:70.70px"><span class="ma">0x00000000000000AB</span>  <span class="mh">?? ?? ?? ?? ?? ?? ?? ?? ?? ?? ?? ?? ?? ?? ?? ?? ?? ?? ?? ?? ?? ?? ?? ?? ?? ?? ?? ?? ?? ?? ?? ?? ?? ?? ?? ?? ?? ?? ?? ?? ?? ?? ?? ?? ?? ?? ?? ?? ?? ?? ?? ?? ?? ?? ?? ?? ??</span>  <span class="md">.........................................................</span></div><div class="b" style="left:184px;top:96.70px;width:1539px;height:18px;background:#c9bdaf"></div><div class="mr" style="top:94.70px"><span class="ma">0x00000000000000E4</span>  <span class="mh">?? ?? ?? ?? ?? ?? ?? ?? ?? ?? ?? ?? ?? ?? ?? ?? ?? ?? ?? ?? ?? ?? ?? ?? ?? ?? ?? ?? ?? ?? ?? ?? ?? ?? ?? ?? ?? ?? ?? ?? ?? ?? ?? ?? ?? ?? ?? ?? ?? ?? ?? ?? ?? ?? ?? ?? ??</span>  <span class="md">.........................................................</span></div><div class="b" style="left:184px;top:120.70px;width:1539px;height:18px;background:#c9bdaf"></div><div class="mr" style="top:118.70px"><span class="ma">0x000000000000011D</span>  <span class="mh">?? ?? ?? ?? ?? ?? ?? ?? ?? ?? ?? ?? ?? ?? ?? ?? ?? ?? ?? ?? ?? ?? ?? ?? ?? ?? ?? ?? ?? ?? ?? ?? ?? ?? ?? ?? ?? ?? ?? ?? ?? ?? ?? ?? ?? ?? ?? ?? ?? ?? ?? ?? ?? ?? ?? ?? ??</span>  <span class="md">.........................................................</span></div><div class="b" style="left:184px;top:144.70px;width:1539px;height:18px;background:#c9bdaf"></div><div class="mr" style="top:142.70px"><span class="ma">0x0000000000000156</span>  <span class="mh">?? ?? ?? ?? ?? ?? ?? ?? ?? ?? ?? ?? ?? ?? ?? ?? ?? ?? ?? ?? ?? ?? ?? ?? ?? ?? ?? ?? ?? ?? ?? ?? ?? ?? ?? ?? ?? ?? ?? ?? ?? ?? ?? ?? ?? ?? ?? ?? ?? ?? ?? ?? ?? ?? ?? ?? ??</span>  <span class="md">.........................................................</span></div></div>
<div class="b" style="left:13px;top:448px;width:92px;height:42px;background:#252526;border:2px solid #3f3f46;border-top:none;box-sizing:border-box"></div>
<div class="t" style="left:26px;top:449.0px;line-height:40px;font-size:24px;color:#0097fb;">内存 1</div>
<div class="t" style="left:119px;top:449.0px;line-height:40px;font-size:24px;color:#d0d0d0;">内存 2</div>
<div class="t" style="left:25px;top:503.0px;line-height:40px;font-size:24px;color:#f1f1f1;">反汇编</div>
<div class="b" style="left:187px;top:502px;width:287px;height:40px;background:#007acc;"></div>
<div class="t" style="left:195.5px;top:503.0px;line-height:40px;font-size:25px;color:#ffffff;letter-spacing:-0.017px;">MFCLibrary1.cpp</div>
<svg class="b" style="left:408px;top:516.5px;" width="18" height="16" viewBox="0 0 18 16"><g fill="none" stroke="#fff" stroke-width="2"><path d="M0 8H7"/><path d="M7 1V15"/><path d="M7 3.5H16V11H7"/></g><rect x="7" y="10" width="9" height="2.500" fill="#fff"/></svg>
<svg class="b" style="left:443px;top:516.5px;" width="20" height="18" viewBox="0 0 20 18"><path d="M1.5 1L18.5 17M18.5 1L1.5 17" stroke="#fff" stroke-width="3"/></svg>
<div class="t" style="left:484.5px;top:501.5px;line-height:40px;font-size:25px;color:#f1f1f1;letter-spacing:0.33px;">CMainDialog.cpp</div>
<div class="t" style="left:778px;top:501.5px;line-height:40px;font-size:25px;color:#f1f1f1;letter-spacing:0.303px;">CMainDialog.h</div>
<div class="b" style="left:15px;top:541px;width:2264px;height:4px;background:#007acc;"></div>
<div class="b" style="left:15px;top:545px;width:2264px;height:44px;background:#2d2d30;"></div>
<div class="b" style="left:16px;top:546px;width:539px;height:41px;background:#333337;border:2px solid #434346;box-sizing:border-box"></div>
<svg class="b" style="left:23px;top:553px;" width="28" height="24" viewBox="0 0 28 24"><rect x="1" y="1" width="26" height="22" fill="none" stroke="#c586c0" stroke-width="2"/><path d="M5 8H14M9.5 4V12.500M13 16H23M18 11.500V20.500" stroke="#e8e8e8" stroke-width="3.200"/><path d="M9.500 8L18 16" stroke="#e8e8e8" stroke-width="3"/></svg>
<div class="t" style="left:58px;top:546.5px;line-height:40px;font-size:25px;color:#f1f1f1;letter-spacing:-0.288px;">MFCLibrary1</div>
<svg class="b" style="left:537.3px;top:564.85px;" width="12.4" height="6.3" viewBox="0 0 12.4 6.3"><path d="M0 0H12.4L6.2 6.3Z" fill="#999"/></svg>
<div class="b" style="left:562px;top:546px;width:539px;height:41px;background:#333337;border:2px solid #434346;box-sizing:border-box"></div>
<svg class="b" style="left:570px;top:555px;" width="28" height="22" viewBox="0 0 28 22"><path d="M0 11H25M15 1.500L25.500 11L15 20.500" fill="none" stroke="#c8c8c8" stroke-width="3.600"/></svg>
<div class="t" style="left:604.5px;top:546.5px;line-height:40px;font-size:25px;color:#f1f1f1;letter-spacing:-0.037px;">CMFCLibrary1App</div>
<svg class="b" style="left:1083.3px;top:564.85px;" width="12.4" height="6.3" viewBox="0 0 12.4 6.3"><path d="M0 0H12.4L6.2 6.3Z" fill="#999"/></svg>
<div class="b" style="left:1108px;top:546px;width:1171px;height:41px;background:#333337;border:2px solid #434346;box-sizing:border-box"></div>
<svg class="b" style="left:1114px;top:555px;" width="20" height="21" viewBox="0 0 20 21"><g fill="none" stroke="#b180d7" stroke-width="2"><path d="M10 1L19 5.500V15.500L10 20L1 15.500V5.500Z"/><path d="M1 5.500L10 10L19 5.500M10 10V20"/></g></svg>
<div class="t" style="left:1151px;top:546.5px;line-height:40px;font-size:25px;color:#f1f1f1;letter-spacing:0.376px;">InitInstance()</div>
<div class="b" style="left:13px;top:545px;width:2px;height:437px;background:#3f3f46;"></div>
<div class="b" style="left:15px;top:589px;width:50px;height:357px;background:#333337;"></div>
<div class="b" style="left:65px;top:589px;width:2214px;height:357px;background:#1e1e1e;"></div>
<div class="b" style="left:192px;top:694px;width:14px;height:246px;background:#57792e;"></div>
<div class="b" style="left:192px;top:729.0999999999999px;width:14px;height:1px;background:#4f6f2a;"></div>
<div class="b" style="left:192px;top:764.15px;width:14px;height:1px;background:#4f6f2a;"></div>
<div class="b" style="left:192px;top:799.1999999999999px;width:14px;height:1px;background:#4f6f2a;"></div>
<div class="b" style="left:192px;top:834.25px;width:14px;height:1px;background:#4f6f2a;"></div>
<div class="b" style="left:192px;top:869.3px;width:14px;height:1px;background:#4f6f2a;"></div>
<div class="b" style="left:192px;top:904.3499999999999px;width:14px;height:1px;background:#4f6f2a;"></div>
<div class="b" style="left:240px;top:693px;width:2039px;height:35.5px;border:5px solid #464646;border-right:none;box-sizing:border-box"></div>
<div class="b" style="left:214px;top:627.9499999999999px;width:26px;height:27px;background:#1e1e1e;border:3px solid #a0a0a0;box-sizing:border-box"></div>
<div class="b" style="left:219px;top:639.7499999999999px;width:15px;height:3.5px;background:#e6e6e6;"></div>
<div class="b" style="left:214px;top:768.15px;width:26px;height:27px;background:#1e1e1e;border:3px solid #a0a0a0;box-sizing:border-box"></div>
<div class="b" style="left:219px;top:779.9499999999999px;width:15px;height:3.5px;background:#e6e6e6;"></div>
<div class="b" style="left:227px;top:658px;width:3px;height:110.14999999999998px;background:#a5a5a5;"></div>
<div class="b" style="left:227px;top:795.15px;width:3px;height:150.85000000000002px;background:#a5a5a5;"></div>
<div class="b" style="left:227px;top:901px;width:13px;height:3px;background:#a5a5a5;"></div>
<svg class="b" style="left:248.7px;top:699.8px;" width="4" height="246.20000000000005" viewBox="0 0 4 246.20000000000005"><path d="M1.750 0V246.20000000000005" stroke="#8c8c8c" stroke-width="3.500" stroke-dasharray="8 9.525"/></svg>
<svg class="b" style="left:301.5px;top:839.8px;" width="4" height="26.700000000000045" viewBox="0 0 4 26.700000000000045"><path d="M1.750 0V26.700000000000045" stroke="#8c8c8c" stroke-width="3.500" stroke-dasharray="8 9.525"/></svg>
<div class="b" style="left:15px;top:589px;width:1600px;height:357px;overflow:hidden"><div class="ln" style="top:-1.40px">71</div><div class="ln" style="top:33.65px">72</div><div class="cl" style="top:31.95px"><i class="ty">BOOL</i> <i class="ty">CMFCLibrary1App</i>::<i class="fn">InitInstance</i>()</div><div class="ln" style="top:68.70px">73</div><div class="cl" style="top:67.00px">{</div><div class="ln" style="top:103.75px">74</div><div class="cl" style="top:102.05px">    <i class="ty">CWinApp</i>::<i class="fn">InitInstance</i>();</div><div class="ln" style="top:138.80px">75</div><div class="ln" style="top:173.85px">76</div><div class="cl" style="top:172.15px">    <i class="kw">if</i> (!::<i class="fn">CreateThread</i>(<i class="mc">NULL</i>, <i class="nu">0</i>, (<i class="ty">LPTHREAD_START_ROUTINE</i>)<i class="fn">ThreadFunction</i>, <i class="mc">NULL</i>, <i class="nu">0</i>, <i class="mc">NULL</i>))</div><div class="ln" style="top:208.90px">77</div><div class="cl" style="top:207.20px">    {</div><div class="ln" style="top:243.95px">78</div><div class="cl" style="top:242.25px">        <i class="fn">MessageBoxA</i>(<i class="mc">NULL</i>, <i class="st">"CreateThread() error"</i>, <i class="mc">NULL</i>, <i class="nu">0</i>);</div><div class="ln" style="top:279.00px">79</div><div class="cl" style="top:277.30px">    }</div><div class="ln" style="top:314.05px">80</div><div class="ln" style="top:349.10px">81</div><div class="cl" style="top:344.60px">    <i class="kw">return</i> <i class="mc">TRUE</i>;</div></div>
<svg class="b" style="left:27px;top:697px" width="27" height="26" viewBox="27 697 27 26"><circle cx="40.100" cy="709.900" r="12.100" fill="#f5503f"/><path d="M30.600 704.600H38.600V701L51 709.900L38.600 718.800V715.400H30.600Z" fill="#ffd426" stroke="#c9c9c9" stroke-width="1.900" stroke-linejoin="miter"/></svg>
<svg class="b" style="left:42px;top:610px" width="48" height="84" viewBox="42 610 48 84"><path d="M86 612.600L49.600 672.100L44 664.800L46 692.100L68.700 676.500L59.400 676.800Z" fill="#ff1c14"/></svg>
<div class="b" style="left:15px;top:946px;width:2264px;height:36px;background:#3e3e42;"></div>
<div class="b" style="left:17px;top:947.5px;width:116px;height:31px;background:#333337;border:1px solid #3c3c40;box-sizing:border-box"></div>
<div class="t" style="left:20px;top:943.5px;line-height:40px;font-size:24.5px;color:#f1f1f1;letter-spacing:-0.717px;">146 %</div>
<svg class="b" style="left:117.0px;top:962.0px;" width="12" height="6" viewBox="0 0 12 6"><path d="M0 0H12L6.0 6Z" fill="#f1f1f1"/></svg>
<svg class="b" style="left:181px;top:951px;" width="26" height="26" viewBox="0 0 26 26"><circle cx="13" cy="13" r="11.500" fill="#1f9e3f" stroke="#f1f1f1" stroke-width="2"/><path d="M6.500 13.500L11 18L19.500 8.500" fill="none" stroke="#fff" stroke-width="3"/></svg>
<div class="t" style="left:214.5px;top:943.5px;line-height:40px;font-size:22px;color:#f1f1f1;">未找到相关问题</div>
<svg class="b" style="left:539px;top:955px;" width="11" height="17" viewBox="0 0 11 17"><path d="M11 0V17L0 8.500Z" fill="#999"/></svg>
<div class="b" style="left:561px;top:955px;width:522px;height:16px;background:#686868;"></div>
<svg class="b" style="left:1239px;top:955px;" width="11" height="17" viewBox="0 0 11 17"><path d="M0 0V17L11 8.500Z" fill="#999"/></svg>
<div class="t" style="left:1306px;top:943.5px;line-height:40px;font-size:22.5px;color:#f1f1f1;">行: 74</div>
<div class="t" style="left:1402px;top:943.5px;line-height:40px;font-size:22.5px;color:#f1f1f1;">字符: 1</div>
<div class="t" style="left:1509.5px;top:943.5px;line-height:40px;font-size:22.5px;color:#f1f1f1;">制表符</div>
<div class="b" style="left:13px;top:994px;width:1138px;height:343px;border:2px solid #3f3f46;box-sizing:border-box"></div>
<div class="t" style="left:23px;top:999.7px;line-height:40px;font-size:24px;color:#d0d0d0;">局部变量</div>
<svg class="b" style="left:134px;top:1013px;" width="904" height="10" viewBox="0 0 904 10"><defs><pattern id="g134_1018" width="4" height="7.6" patternUnits="userSpaceOnUse"><rect x="0" y="0" width="1.500" height="1.500" fill="#47474b"/><rect x="2" y="3.800" width="1.500" height="1.500" fill="#47474b"/></pattern></defs><rect width="904" height="9.2" fill="url(#g134_1018)"/></svg>
<svg class="b" style="left:1053px;top:1014px;" width="16" height="8" viewBox="0 0 16 8"><path d="M0 0H16L8 8Z" fill="#f1f1f1"/></svg><svg class="b" style="left:1085.5px;top:1006px;" width="15" height="22" viewBox="0 0 15 22"><g fill="none" stroke="#f1f1f1" stroke-width="2"><path d="M4 1H11V10H4Z"/><path d="M0 11H15"/><path d="M7.5 11V22"/></g><rect x="9" y="1" width="2.5" height="9" fill="#f1f1f1"/></svg><svg class="b" style="left:1117.5px;top:1010px;" width="20" height="16" viewBox="0 0 20 16"><path d="M1.500 0.800L18.500 15.200M18.500 0.800L1.500 15.200" stroke="#f1f1f1" stroke-width="3.300"/></svg>
<div class="b" style="left:16px;top:1041px;width:448px;height:43px;background:#333337;border:2px solid #434346;box-sizing:border-box"></div>
<div class="t" style="left:25px;top:1043.5px;line-height:40px;font-size:24px;color:#8c8c8c;">搜索(Ctrl+E)</div>
<svg class="b" style="left:407px;top:1047px" width="31" height="30" viewBox="407 1047 31 30"><circle cx="427.300" cy="1057.600" r="6.300" fill="none" stroke="#f1f1f1" stroke-width="3.600"/><path d="M422.300 1062.800L411.300 1073.200" stroke="#f1f1f1" stroke-width="5"/></svg>
<div class="b" style="left:441px;top:1043px;width:22px;height:39px;background:#3e3e42;"></div>
<svg class="b" style="left:446.5px;top:1061.0px;" width="11" height="6" viewBox="0 0 11 6"><path d="M0 0H11L5.5 6Z" fill="#f1f1f1"/></svg>
<svg class="b" style="left:480px;top:1050px" width="31" height="30" viewBox="480 1050 31 30"><path d="M509 1064.900H485M494.500 1053.800L484 1064.900L494.500 1076" fill="none" stroke="#555558" stroke-width="3.800"/></svg>
<svg class="b" style="left:524px;top:1050px" width="31" height="30" viewBox="524 1050 31 30"><path d="M525.300 1064.900H549.500M540 1053.800L550.500 1064.900L540 1076" fill="none" stroke="#555558" stroke-width="3.800"/></svg>
<div class="t" style="left:566.5px;top:1045.8px;line-height:40px;font-size:24px;color:#f1f1f1;">搜索深度:</div>
<div class="b" style="left:681px;top:1045px;width:80px;height:39px;background:#333337;border:2px solid #434346;box-sizing:border-box"></div>
<div class="t" style="left:689.5px;top:1044.5px;line-height:40px;font-size:25px;color:#f1f1f1;">3</div>
<svg class="b" style="left:740.3px;top:1062.85px;" width="12.4" height="6.3" viewBox="0 0 12.4 6.3"><path d="M0 0H12.4L6.2 6.3Z" fill="#999"/></svg>
<div class="b" style="left:774.2px;top:1047.2px;width:1.8px;height:36px;background:#222224;"></div><div class="b" style="left:776px;top:1047.2px;width:2px;height:36px;background:#46464a;"></div>
<svg class="b" style="left:790px;top:1050px;" width="29" height="28" viewBox="0 0 29 28"><path d="M9 1H29L21 12V24L17 20V12Z" fill="#c8c8c8"/><g fill="none" stroke="#c8c8c8" stroke-width="2.200"><path d="M4 4H10V14H4Z"/><path d="M0 15H14M7 15V28"/></g><rect x="3" y="3" width="8" height="12" fill="#2d2d30"/><g fill="none" stroke="#c8c8c8" stroke-width="2.200"><path d="M4 4H10V14H4Z"/><path d="M0 15H14M7 15V28"/></g><rect x="8" y="4" width="2.500" height="10" fill="#c8c8c8"/></svg>
<div class="b" style="left:827px;top:1043px;width:44px;height:44px;background:#2d2d30;border:2px solid #3794ff;box-sizing:border-box"></div>
<svg class="b" style="left:835px;top:1049px;" width="30" height="31" viewBox="0 0 30 31"><g fill="none" stroke="#c8c8c8" stroke-width="2"><path d="M5 1H10V11H5Z"/><path d="M1 12H14"/><path d="M3 14V29H29V12H15"/></g><rect x="8" y="1" width="2.500" height="10" fill="#c8c8c8"/></svg>
<div class="t" style="left:843px;top:1063px;line-height:16px;font-size:15.500px;color:#c8c8c8;letter-spacing:-0.5px">ab</div>
<div class="b" style="left:16px;top:1091px;width:1099px;height:245px;background:#252526;"></div>
<div class="b" style="left:1115px;top:1091px;width:34px;height:245px;background:#3e3e42;"></div>
<svg class="b" style="left:1124px;top:1103px;" width="17" height="9" viewBox="0 0 17 9"><path d="M0 9H17L8.500 0Z" fill="#5a5a5e"/></svg>
<svg class="b" style="left:1124px;top:1314px;" width="17" height="9" viewBox="0 0 17 9"><path d="M0 0H17L8.500 9Z" fill="#5a5a5e"/></svg>
<div class="b" style="left:16px;top:1125.5px;width:1099px;height:1.5px;background:#1b1b1c;"></div>
<div class="b" style="left:31px;top:1091px;width:1px;height:35px;background:#3f3f46;"></div>
<div class="b" style="left:392px;top:1091px;width:1px;height:73px;background:#3f3f46;"></div>
<div class="b" style="left:934px;top:1091px;width:1px;height:73px;background:#3f3f46;"></div>
<div class="t" style="left:36.5px;top:1089.5px;line-height:40px;font-size:24px;color:#f1f1f1;">名称</div>
<div class="t" style="left:398px;top:1089.5px;line-height:40px;font-size:24px;color:#f1f1f1;">值</div>
<div class="t" style="left:940px;top:1089.5px;line-height:40px;font-size:24px;color:#f1f1f1;">类型</div>
<div class="b" style="left:68px;top:1128px;width:323px;height:35px;background:#3f3f46;"></div>
<div class="b" style="left:393px;top:1128px;width:540px;height:35px;background:#333337;"></div>
<div class="b" style="left:935px;top:1128px;width:180px;height:35px;background:#333337;"></div>
<div class="b" style="left:32px;top:1163px;width:1083px;height:1.5px;background:#111112;"></div>
<div class="b" style="left:392px;top:1127px;width:1.5px;height:37px;background:#111112;"></div>
<div class="b" style="left:933.5px;top:1127px;width:1.5px;height:37px;background:#111112;"></div>
<svg class="b" style="left:45.5px;top:1138.5px;" width="10" height="16" viewBox="0 0 10 16"><path d="M1 1.200L7.800 7.600L1 14Z" fill="none" stroke="#c8c8c8" stroke-width="1.900"/></svg>
<svg class="b" style="left:71px;top:1136px;" width="23" height="20" viewBox="0 0 23 20"><path d="M2 5L12 0.500L22 5V14L10 19.500L2 14Z" fill="#75beff"/><path d="M2.500 5.500L10 9.500V19" fill="none" stroke="#2d2d30" stroke-width="0" /><path d="M6.500 6.300L13 3.400L17.500 5.300L11 8.300Z" fill="#3f3f46"/></svg>
<div class="t" style="left:107.5px;top:1127.5px;line-height:40px;font-size:25px;color:#f1f1f1;letter-spacing:0.698px;">this</div>
<div class="t" style="left:398px;top:1127.5px;line-height:40px;font-size:25px;color:#f1f1f1;letter-spacing:-0.062px;">0x00007ffed0befad0 {MFCLibrary1.dll!CMFCLi...</div>
<div class="t" style="left:940px;top:1127.5px;line-height:40px;font-size:25px;color:#f1f1f1;letter-spacing:-0.339px;">CMFCLibrary...</div>
<div class="t" style="left:25.5px;top:1337.0px;line-height:40px;font-size:24px;color:#d0d0d0;">自动窗口</div>
<div class="b" style="left:133px;top:1335px;width:120px;height:43px;background:#252526;border:2px solid #3f3f46;border-top:none;box-sizing:border-box"></div>
<div class="t" style="left:145px;top:1337.0px;line-height:40px;font-size:24px;color:#0097fb;">局部变量</div>
<div class="t" style="left:265px;top:1337.0px;line-height:40px;font-size:24px;color:#d0d0d0;">监视 1</div>
<div class="b" style="left:1164px;top:994px;width:1151px;height:343px;border:2px solid #3f3f46;box-sizing:border-box"></div>
<div class="t" style="left:1175px;top:999.7px;line-height:40px;font-size:24px;color:#d0d0d0;">调用堆栈</div>
<svg class="b" style="left:1285px;top:1013px;" width="913" height="10" viewBox="0 0 913 10"><defs><pattern id="g1285_1018" width="4" height="7.6" patternUnits="userSpaceOnUse"><rect x="0" y="0" width="1.500" height="1.500" fill="#47474b"/><rect x="2" y="3.800" width="1.500" height="1.500" fill="#47474b"/></pattern></defs><rect width="913" height="9.2" fill="url(#g1285_1018)"/></svg>
<svg class="b" style="left:2216.5px;top:1014px;" width="16" height="8" viewBox="0 0 16 8"><path d="M0 0H16L8 8Z" fill="#f1f1f1"/></svg><svg class="b" style="left:2248.5px;top:1006px;" width="15" height="22" viewBox="0 0 15 22"><g fill="none" stroke="#f1f1f1" stroke-width="2"><path d="M4 1H11V10H4Z"/><path d="M0 11H15"/><path d="M7.5 11V22"/></g><rect x="9" y="1" width="2.5" height="9" fill="#f1f1f1"/></svg><svg class="b" style="left:2280.5px;top:1010px;" width="20" height="16" viewBox="0 0 20 16"><path d="M1.500 0.800L18.500 15.200M18.500 0.800L1.500 15.200" stroke="#f1f1f1" stroke-width="3.300"/></svg>
<div class="b" style="left:1166px;top:1040px;width:1113px;height:296px;background:#252526;"></div>
<div class="b" style="left:2279px;top:1040px;width:34px;height:296px;background:#3e3e42;"></div>
<svg class="b" style="left:2288px;top:1051px;" width="17" height="9" viewBox="0 0 17 9"><path d="M0 9H17L8.500 0Z" fill="#5a5a5e"/></svg>
<svg class="b" style="left:2288px;top:1314px;" width="17" height="9" viewBox="0 0 17 9"><path d="M0 0H17L8.500 9Z" fill="#5a5a5e"/></svg>
<div class="t" style="left:1204px;top:1037.0px;line-height:40px;font-size:24px;color:#f1f1f1;">名称</div>
<div class="t" style="left:2225px;top:1037.0px;line-height:40px;font-size:24px;color:#f1f1f1;">语言</div>
<div class="b" style="left:1166px;top:1076px;width:1053px;height:36px;background:#3f3f46;"></div>
<div class="b" style="left:2220px;top:1076px;width:59px;height:36px;background:#3f3f46;"></div>
<div class="b" style="left:1166px;top:1075px;width:1113px;height:1.5px;background:#111112;"></div>
<div class="b" style="left:1166px;top:1112px;width:1113px;height:1.5px;background:#111112;"></div>
<div class="b" style="left:1166px;top:1149.5px;width:1113px;height:1.5px;background:#111112;"></div>
<div class="b" style="left:1166px;top:1186.5px;width:1113px;height:1.5px;background:#111112;"></div>
<div class="b" style="left:1166px;top:1223.5px;width:1113px;height:1.5px;background:#111112;"></div>
<div class="b" style="left:1198px;top:1075px;width:1.5px;height:149px;background:#111112;"></div>
<div class="b" style="left:2219px;top:1075px;width:1.5px;height:149px;background:#111112;"></div>
<div class="b" style="left:1198px;top:1040px;width:1px;height:35px;background:#3a3a3e;"></div>
<div class="b" style="left:2219px;top:1040px;width:1px;height:35px;background:#3a3a3e;"></div>
<svg class="b" style="left:1170px;top:1083px;" width="25" height="25" viewBox="0 0 25 25"><circle cx="12.100" cy="12.100" r="12.100" fill="#f5503f"/><path d="M2.600 6.800H10.600V3.200L23 12.100L10.600 21V17.600H2.600Z" fill="#ffd426" stroke="#c9c9c9" stroke-width="1.900"/></svg>
<div class="t" style="left:1204px;top:1076.0px;line-height:40px;font-size:25px;color:#f1f1f1;width:1014px;overflow:hidden;letter-spacing:0px"><span style="letter-spacing:-0.360px">MFCLibrary1.dll!CMFCLibrar</span>y1App::InitInstance() 行 74</div>
<div class="t" style="left:2224.5px;top:1076.0px;line-height:40px;font-size:25px;color:#f1f1f1;letter-spacing:1.867px;">C++</div>
<div class="t" style="left:1204px;top:1113.5px;line-height:40px;font-size:25px;color:#f1f1f1;width:1014px;overflow:hidden;letter-spacing:0px"><span style="letter-spacing:0.370px">MFCLibrary1.dll!InternalDllM</span>ain(HINSTANCE__ * hInstance, unsigned long dwReason,<span style="margin-left:2.66px">v...</span></div>
<div class="t" style="left:2224.5px;top:1113.5px;line-height:40px;font-size:25px;color:#f1f1f1;letter-spacing:1.867px;">C++</div>
<div class="t" style="left:1204px;top:1150.5px;line-height:40px;font-size:25px;color:#f1f1f1;width:1014px;overflow:hidden;letter-spacing:-0.01px">MFCLibrary1.dll!DllMain(HINSTANCE__ * hInstance, unsigned long dwReason, void * lpR...</div>
<div class="t" style="left:2224.5px;top:1150.5px;line-height:40px;font-size:25px;color:#f1f1f1;letter-spacing:1.867px;">C++</div>
<div class="t" style="left:1204px;top:1187.0px;line-height:40px;font-size:27px;color:#8c8c8c;width:1014px;overflow:hidden;letter-spacing:0px">[外部代码]</div>
<div class="b" style="left:1164px;top:1335px;width:120px;height:43px;background:#252526;border:2px solid #3f3f46;border-top:none;box-sizing:border-box"></div>
<div class="t" style="left:1176px;top:1337.0px;line-height:40px;font-size:24px;color:#0097fb;">调用堆栈</div>
<div class="t" style="left:1296px;top:1337.0px;line-height:40px;font-size:24px;color:#d0d0d0;">断点</div>
<div class="t" style="left:1368px;top:1337.0px;line-height:40px;font-size:24px;color:#d0d0d0;">异常设置</div>
<div class="t" style="left:1488px;top:1337.0px;line-height:40px;font-size:24px;color:#d0d0d0;">命令窗口</div>
<div class="t" style="left:1608px;top:1337.0px;line-height:40px;font-size:24px;color:#d0d0d0;">即时窗口</div>
<div class="t" style="left:1728px;top:1337.0px;line-height:40px;font-size:24px;color:#d0d0d0;">输出</div>
<div class="b" style="left:0px;top:1390px;width:2375px;height:45px;background:#ca5100;"></div>
<svg class="b" style="left:9px;top:1403px;" width="34" height="24" viewBox="0 0 34 24"><path d="M7 2H32L26 22H1.500Z" fill="none" stroke="#fff" stroke-width="2.200"/></svg>
<div class="t" style="left:57px;top:1395.0px;line-height:40px;font-size:24px;color:#ffffff;letter-spacing:0.612px;">正在加载 msimg32.dll 的符号</div>
<svg class="b" style="left:1978px;top:1404px;" width="18" height="22" viewBox="0 0 18 22"><path d="M9 22V3M1.500 10.500L9 2.500L16.500 10.500" fill="none" stroke="#e8e8e8" stroke-width="3"/></svg>
<div class="t" style="left:2014px;top:1395.0px;line-height:40px;font-size:24px;color:#ffffff;">添加到源代码管理</div>
<svg class="b" style="left:2284px;top:1400px;" width="14" height="28" viewBox="0 0 14 28"><path d="M3 6A4 4 0 0 1 11 6V19H3Z" fill="#dcdcdc"/><circle cx="7" cy="24" r="3" fill="#dcdcdc"/></svg>
<svg class="b" style="left:2351px;top:1414px;" width="18" height="18" viewBox="0 0 18 18"><g fill="#e0a070"><rect x="14" y="0" width="2" height="2"/><rect x="10" y="4" width="2" height="2"/><rect x="14" y="4" width="2" height="2"/><rect x="6" y="8" width="2" height="2"/><rect x="10" y="8" width="2" height="2"/><rect x="14" y="8" width="2" height="2"/><rect x="2" y="12" width="2" height="2"/><rect x="6" y="12" width="2" height="2"/><rect x="10" y="12" width="2" height="2"/><rect x="14" y="12" width="2" height="2"/></g></svg>
<div class="t wm" style="left:2021px;top:1395.57px;line-height:32.4px;font-size:32.4px;transform:scaleX(1.415)">www.</div>
<div class="t wm" style="left:2138px;top:1392.27px;line-height:36.3px;font-size:36.3px;transform:scaleX(1.1146)">92</div>
<div class="t wm" style="left:2183px;top:1395.57px;line-height:32.4px;font-size:32.4px;transform:scaleX(1.2552)">wuyou.cn</div>
<div class="b" style="left:2365px;top:194.5px;width:10px;height:216px;background:#3f3f46;"></div>
<div class="b" style="left:2365px;top:435px;width:10px;height:88px;background:#3f3f46;"></div>
<div class="t vt" style="left:2328px;top:194px;font-size:24px;line-height:28px;color:#d0d0d0">解决方案资源管理器</div>
<div class="t vt" style="left:2328px;top:434px;font-size:24px;line-height:28px;color:#d0d0d0;letter-spacing:0.6px">Git 更改</div>
<div class="b" style="left:2170px;top:502px;width:145px;height:483px;background:#2d2d30;"></div>
<div class="b" style="left:2170px;top:502px;width:145px;height:46px;border:2px solid #3f3f46;border-bottom:none;box-sizing:border-box"></div>
<svg class="b" style="left:2180px;top:521px;" width="20" height="10" viewBox="0 0 20 10"><defs><pattern id="g2180_526" width="4" height="7.6" patternUnits="userSpaceOnUse"><rect x="0" y="0" width="1.500" height="1.500" fill="#47474b"/><rect x="2" y="3.800" width="1.500" height="1.500" fill="#47474b"/></pattern></defs><rect width="20" height="9.2" fill="url(#g2180_526)"/></svg>
<svg class="b" style="left:2215.5px;top:522px;" width="16" height="8" viewBox="0 0 16 8"><path d="M0 0H16L8 8Z" fill="#f1f1f1"/></svg><svg class="b" style="left:2248.0px;top:514px;" width="15" height="22" viewBox="0 0 15 22"><g fill="none" stroke="#f1f1f1" stroke-width="2"><path d="M4 1H11V10H4Z"/><path d="M0 11H15"/><path d="M7.5 11V22"/></g><rect x="9" y="1" width="2.5" height="9" fill="#f1f1f1"/></svg><svg class="b" style="left:2279.5px;top:518px;" width="20" height="16" viewBox="0 0 20 16"><path d="M1.500 0.800L18.500 15.200M18.500 0.800L1.500 15.200" stroke="#f1f1f1" stroke-width="3.300"/></svg>
<div class="b" style="left:2313px;top:503px;width:2px;height:482px;background:#3f3f46;"></div>
<div class="b" style="left:2170px;top:548px;width:110px;height:53px;background:#2b2b2e;"></div>
<div class="b" style="left:2170px;top:601px;width:110px;height:202px;background:#222223;"></div>
<div class="b" style="left:2279px;top:548px;width:34px;height:255px;background:#3e3e42;"></div>
<svg class="b" style="left:2285px;top:561.5px;" width="22" height="13" viewBox="0 0 22 13"><path d="M1.500 11L11 2L20.500 11" fill="none" stroke="#999" stroke-width="4.400"/></svg>
<div class="b" style="left:2281px;top:580.5px;width:30.5px;height:75px;background:#686868;"></div>
<svg class="b" style="left:2285px;top:775.5px;" width="22" height="13" viewBox="0 0 22 13"><path d="M1.500 2L11 11L20.500 2" fill="none" stroke="#999" stroke-width="4.400"/></svg>
<div class="b" style="left:2170px;top:642.5px;width:110px;height:1.2px;background:#4a4a4a;"></div>
<div class="b" style="left:2170px;top:688px;width:110px;height:1.2px;background:#4a4a4a;"></div>
<div class="b" style="left:2196px;top:643.5px;width:10px;height:43px;background:#e0e0e0;"></div>
<div class="b" style="left:2170px;top:727px;width:37px;height:45px;background:#2d2d30;border:2px solid #4d4d4d;border-left:none;box-sizing:border-box"></div>
<div class="b" style="left:2170px;top:737px;width:26px;height:30px;background:#686868;"></div>
<div class="b" style="left:2196px;top:729px;width:9px;height:41px;background:#5a5a5a;"></div>
<div class="b" style="left:2170px;top:803px;width:143px;height:6px;background:#3e3e42;"></div>
<div class="b" style="left:2170px;top:809px;width:143px;height:45px;background:#222223;"></div>
<div class="b" style="left:2170px;top:854px;width:143px;height:6px;background:#3e3e42;"></div>
<div class="b" style="left:2170px;top:860px;width:110px;height:121px;background:#222223;"></div>
<div class="b" style="left:2279px;top:860px;width:34px;height:121px;background:#3e3e42;"></div>
<svg class="b" style="left:2285px;top:890.0px;" width="22" height="13" viewBox="0 0 22 13"><path d="M1.500 11L11 2L20.500 11" fill="none" stroke="#999" stroke-width="4.400"/></svg>
<svg class="b" style="left:2285px;top:935.0px;" width="22" height="13" viewBox="0 0 22 13"><path d="M1.500 2L11 11L20.500 2" fill="none" stroke="#999" stroke-width="4.400"/></svg>
<div class="b" style="left:2170px;top:904.5px;width:110px;height:1.2px;background:#3e3e42;"></div>
<div class="b" style="left:2170px;top:949px;width:110px;height:1.2px;background:#3e3e42;"></div>
<div class="b" style="left:2170px;top:981px;width:145px;height:4px;background:#3e3e42;"></div>
<div class="b dlg" style="left:1516px;top:374px;width:664px;height:780px"><div class="b" style="left:0px;top:0px;width:664px;height:60px;background:#f3f2f7;"></div><div class="b" style="left:0px;top:60px;width:664px;height:36px;background:#ffffff;"></div><div class="b" style="left:0px;top:96px;width:664px;height:641px;background:#f0f0f0;"></div><div class="b" style="left:0px;top:737px;width:664px;height:1px;background:#d7d7d7;"></div><div class="b" style="left:0px;top:738px;width:664px;height:42px;background:#f0f0f0;"></div><svg class="b" style="left:19px;top:14px;" width="28" height="30" viewBox="0 0 28 30"><path d="M2.600 7L4.800 27" stroke="#b090d0" stroke-width="1.400"/><path d="M2.500 2.500L4.200 6.500L2.300 10L0.800 6.500Z" fill="#9fdcff"/><ellipse cx="16.300" cy="10.200" rx="9.600" ry="9.900" fill="#2fb0ea"/><ellipse cx="14.800" cy="10.600" rx="8.600" ry="9" fill="#dcdcc6"/><path d="M7 14A8.600 9 0 0 0 16 19.600A10 10 0 0 1 7 14Z" fill="#a8a890"/><ellipse cx="11.600" cy="12" rx="1.400" ry="2" fill="#e0209c"/><ellipse cx="18.600" cy="12" rx="1.400" ry="2" fill="#e0209c"/><path d="M5 19Q4 24 8 25.500H22Q26 23 24.500 17Q22 20 15 20Q9 20 5 19Z" fill="#2fa8e4"/><path d="M10.500 19.500H19V25H10.500Z" fill="#a01c84"/><path d="M10.500 22.500H19V25.500H10.500Z" fill="#d8d0c0"/><path d="M8 25.500H22.500V27.800H8Z" fill="#3a2a3a"/></svg><div class="t" style="left:59px;top:10.5px;line-height:40px;font-size:22.8px;color:#000;font-family:'Liberation Sans',sans-serif;transform:scaleX(.955);transform-origin:0 50%;">fQ7D0BzREJ</div><div class="b" style="left:423px;top:26px;width:20px;height:2.2px;background:#111;"></div><div class="b" style="left:514px;top:18px;width:20px;height:20px;border:1.500px solid #b4b4b4;border-radius:3px;box-sizing:border-box"></div><svg class="b" style="left:606px;top:17px;" width="22" height="22" viewBox="0 0 22 22"><path d="M1.500 1.500L20.500 20.500M20.500 1.500L1.500 20.500" stroke="#111" stroke-width="2"/></svg><div class="t" style="left:14.5px;top:59px;line-height:40px;font-size:24px;color:#000;font-family:'Liberation Sans',sans-serif;letter-spacing:0.893px;"><u>P</u>rofiles</div><div class="t" style="left:128px;top:59px;line-height:40px;font-size:24px;color:#000;font-family:'Liberation Sans',sans-serif;letter-spacing:2.467px;"><u>T</u>ools</div><div class="b" style="left:22px;top:135px;width:622px;height:163px;border:2px solid #dcdcdc;box-sizing:border-box"></div><div class="b" style="left:34px;top:126px;width:174px;height:20px;background:#f0f0f0;"></div><div class="t" style="left:39px;top:116px;line-height:40px;font-size:21.5px;color:#000;font-family:'Liberation Sans',sans-serif;letter-spacing:-0.181px;">Process selection</div><div class="t" style="left:63.5px;top:162px;line-height:40px;font-size:21.5px;color:#000;font-family:'Liberation Sans',sans-serif;letter-spacing:0.458px;">Type</div><div class="b" style="left:142px;top:170px;width:26px;height:26px;background:#0a64c0;border-radius:50%"></div><div class="b" style="left:149.70000000000005px;top:177.70000000000005px;width:10.6px;height:10.6px;background:#fff;border-radius:50%"></div><div class="t" style="left:173.5px;top:164.3px;line-height:40px;font-size:21.5px;color:#000;font-family:'Liberation Sans',sans-serif;letter-spacing:-0.042px;">Existing</div><div class="b" style="left:303.79999999999995px;top:170px;width:26px;height:26px;background:#f6f6f6;border:1.800px solid #8a8a8a;border-radius:50%;box-sizing:border-box"></div><div class="t" style="left:335px;top:164.3px;line-height:40px;font-size:21.5px;color:#000;font-family:'Liberation Sans',sans-serif;letter-spacing:-0.058px;">New</div><div class="b" style="left:431.5px;top:170px;width:26px;height:26px;background:#f6f6f6;border:1.800px solid #8a8a8a;border-radius:50%;box-sizing:border-box"></div><div class="t" style="left:463px;top:164.3px;line-height:40px;font-size:21.5px;color:#000;font-family:'Liberation Sans',sans-serif;letter-spacing:-0.222px;">Manual launch</div><div class="t" style="left:34.5px;top:224px;line-height:40px;font-size:21.5px;color:#000;font-family:'Liberation Sans',sans-serif;letter-spacing:-0.212px;">Process</div><div class="b" style="left:139.5px;top:224.5px;width:350px;height:41px;background:#fff;border:1px solid #c4c4c4;border-bottom-color:#8a8a8a;border-radius:4px;box-sizing:border-box"></div><div class="b" style="left:144px;top:230.5px;width:306px;height:29.5px;border:2px dotted #111;box-sizing:border-box"></div><div class="t" style="left:145.5px;top:226.4px;line-height:40px;font-size:22.5px;color:#000;font-family:'Liberation Sans',sans-serif;letter-spacing:-0.167px;">Notepad.exe (35624)</div><svg class="b" style="left:463px;top:240px;" width="18" height="11" viewBox="0 0 18 11"><path d="M1.500 1.200L9 8.800L16.500 1.200" fill="none" stroke="#555" stroke-width="1.600"/></svg><div class="b" style="left:514px;top:223.5px;width:112.5px;height:39px;background:#f9f9f9;border:1px solid #e9e9e9;border-radius:5px;box-sizing:border-box"></div><div class="t" style="left:538.6999999999998px;top:224.5px;line-height:40px;font-size:21.5px;color:#9a9aa0;font-family:'Liberation Sans',sans-serif;letter-spacing:0.087px;">Select</div><div class="b" style="left:22px;top:317px;width:622px;height:316px;border:2px solid #dcdcdc;box-sizing:border-box"></div><div class="b" style="left:34px;top:308px;width:80px;height:20px;background:#f0f0f0;"></div><div class="t" style="left:39px;top:298.5px;line-height:40px;font-size:21.5px;color:#000;font-family:'Liberation Sans',sans-serif;letter-spacing:0.297px;">Images</div><div class="b" style="left:36px;top:348.5px;width:594.5px;height:213.5px;background:#fff;border:1.500px solid #7a7a85;box-sizing:border-box"></div><div class="b" style="left:339px;top:352px;width:1.2px;height:48px;background:#e5e5e5;"></div><div class="b" style="left:539px;top:352px;width:1.2px;height:48px;background:#e5e5e5;"></div><div class="t" style="left:51px;top:356.7px;line-height:40px;font-size:21.5px;color:#000;font-family:'Liberation Sans',sans-serif;letter-spacing:-0.553px;">Name</div><div class="t" style="left:351px;top:356.7px;line-height:40px;font-size:21.5px;color:#000;font-family:'Liberation Sans',sans-serif;letter-spacing:0.407px;">Architecture</div><div class="t" style="left:51px;top:398.5px;line-height:40px;font-size:21.5px;color:#000;font-family:'Liberation Sans',sans-serif;letter-spacing:-0.138px;">MFCLibrary1.dll</div><div class="t" style="left:351px;top:398.5px;line-height:40px;font-size:21.5px;color:#000;font-family:'Liberation Sans',sans-serif;letter-spacing:0.738px;">64 bit</div><div class="b" style="left:38.5px;top:584.5px;width:145px;height:41px;background:#fdfdfd;border:1px solid #d0d0d0;border-bottom-color:#bdbdbd;border-radius:6px;box-sizing:border-box"></div><div class="t" style="left:91px;top:586.4px;line-height:40px;font-size:21.5px;color:#000;font-family:'Liberation Sans',sans-serif;letter-spacing:0.567px;">Add</div><div class="b" style="left:258.5px;top:584.5px;width:145px;height:41px;background:#fdfdfd;border:1px solid #d0d0d0;border-bottom-color:#bdbdbd;border-radius:6px;box-sizing:border-box"></div><div class="t" style="left:290px;top:586.4px;line-height:40px;font-size:21.5px;color:#000;font-family:'Liberation Sans',sans-serif;letter-spacing:0.028px;">Remove</div><div class="b" style="left:482px;top:584.5px;width:145px;height:41px;background:#fdfdfd;border:1px solid #d0d0d0;border-bottom-color:#bdbdbd;border-radius:6px;box-sizing:border-box"></div><div class="t" style="left:529px;top:586.4px;line-height:40px;font-size:21.5px;color:#000;font-family:'Liberation Sans',sans-serif;letter-spacing:-0.098px;">Clear</div><div class="b" style="left:25.5px;top:659.5px;width:279px;height:49px;background:#f7f7f7;border:1px solid #ececec;border-bottom-color:#ececec;border-radius:6px;box-sizing:border-box"></div><div class="t" style="left:135px;top:664.5px;line-height:40px;font-size:21.5px;color:#9a9a9a;font-family:'Liberation Sans',sans-serif;letter-spacing:1.462px;">Inject</div><div class="b" style="left:360.5px;top:659px;width:280.5px;height:50.5px;background:#fdfdfd;border:1px solid #d0d0d0;border-bottom-color:#bdbdbd;border-radius:6px;box-sizing:border-box"></div><div class="t" style="left:451.5px;top:664.75px;line-height:40px;font-size:21.5px;color:#000;font-family:'Liberation Sans',sans-serif;letter-spacing:0.194px;">Advanced</div><div class="t" style="left:5px;top:739.5px;line-height:40px;font-size:26.6px;color:#000;font-family:'Liberation Sans',sans-serif;letter-spacing:0.186px;">Default profile</div><div class="b" style="left:298.5px;top:740px;width:1.2px;height:37px;background:#d7d7d7;"></div><div class="b" style="left:398px;top:740px;width:1.2px;height:37px;background:#d7d7d7;"></div><div class="t" style="left:308.5px;top:739.5px;line-height:40px;font-size:26.6px;color:#000;font-family:'Liberation Sans',sans-serif;letter-spacing:-0.995px;">x64</div><div class="t" style="left:409.5px;top:739.5px;line-height:40px;font-size:26.6px;color:#000;font-family:'Liberation Sans',sans-serif;letter-spacing:-0.502px;">Injecting...</div><svg class="b" style="left:204px;top:254px" width="110" height="56" viewBox="1720 628 110 56"><path d="M1724.700 679.800L1806.600 637.600L1800.300 632.100L1826.100 634.100L1810.100 655.700L1810.500 646.700Z" fill="#ff1c14"/></svg><svg class="b" style="left:90px;top:424px" width="42" height="54" viewBox="1606 798 42 54"><path d="M1644.200 802.300L1619.200 812.600L1628.700 816L1610.300 847.700L1636.800 821.900L1640.500 828.500Z" fill="#ff1c14"/></svg></div>
</body></html>
